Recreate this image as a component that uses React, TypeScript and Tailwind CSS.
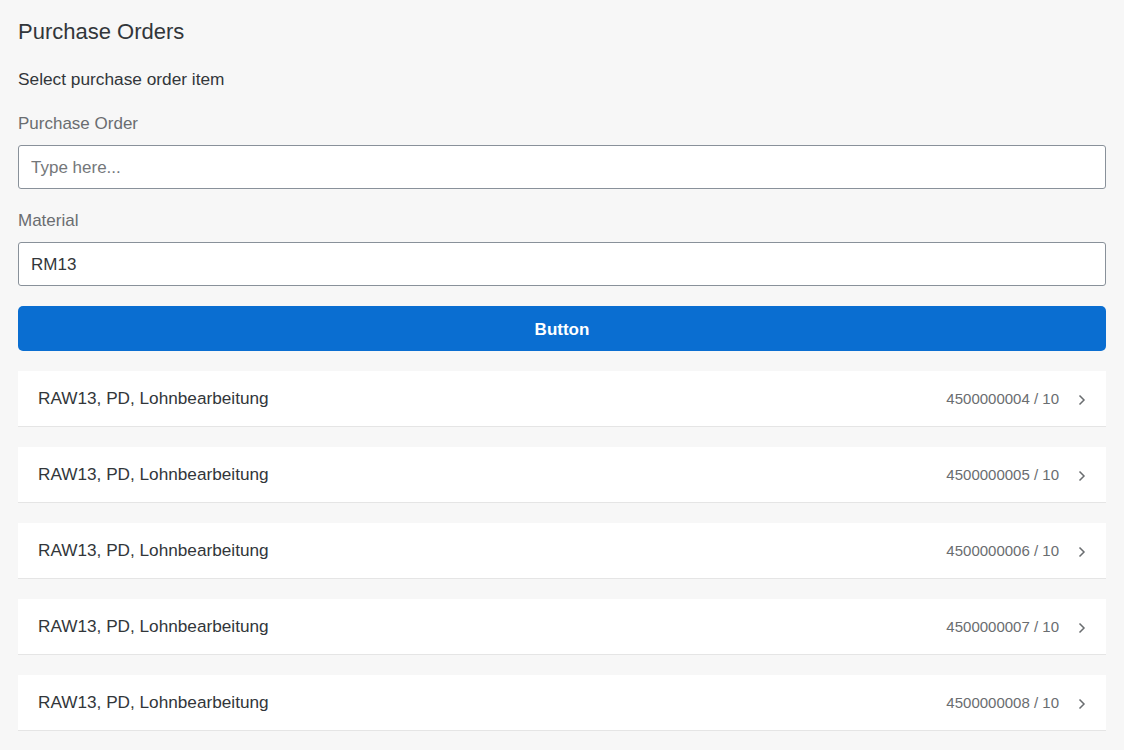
import { useState } from "react";

const items = [
  { id: "4500000004", pos: "10" },
  { id: "4500000005", pos: "10" },
  { id: "4500000006", pos: "10" },
  { id: "4500000007", pos: "10" },
  { id: "4500000008", pos: "10" },
];

export default function App() {
  const [po, setPo] = useState("");
  const [mat, setMat] = useState("RM13");

  return (
    <div className="min-h-[750px] bg-[#f7f7f7] px-[18px] pt-5 pb-5 text-[#32363a] font-['Liberation_Sans',Arial,sans-serif]">
      <h1 className="text-[22px] leading-6">Purchase Orders</h1>
      <p className="mt-[25px] text-[17.3px] leading-5">Select purchase order item</p>

      <Field label="Purchase Order" v={po} on={setPo} placeholder="Type here..." top="mt-[25px]" />
      <Field label="Material" v={mat} on={setMat} top="mt-[22px]" />

      <button className="mt-5 h-[45px] w-full rounded-[5px] bg-[#0a6ed1] pt-[3px] text-[17px] font-bold text-white">Button</button>

      <div className="mt-5 flex flex-col gap-5">
        {items.map((it) => (
          <div key={it.id} className="flex h-14 items-center border-b border-[#e5e5e5] bg-white px-5">
            <span className="flex-1 pt-px text-[17.2px]">RAW13, PD, Lohnbearbeitung</span>
            <span className="pt-px text-[15px] text-[#6a6d70]">{it.id} / {it.pos}</span>
            <svg width="8" height="12" viewBox="0 0 8 12" className="ml-[19px] mt-0.5 text-[#6a6d70]">
              <polyline points="1.5,1.5 6,6 1.5,10.5" fill="none" stroke="currentColor" strokeWidth="1.5" />
            </svg>
          </div>
        ))}
      </div>
    </div>
  );
}

function Field({ label, v, on, placeholder, top }: { label: string; v: string; on: (x: string) => void; placeholder?: string; top: string }) {
  return (
    <div className={top}>
      <label className="block text-[17px] leading-5 text-[#6a6d70]">{label}</label>
      <input
        value={v}
        placeholder={placeholder}
        onChange={(e) => on(e.target.value)}
        className="mt-[11px] h-11 w-full rounded-[3px] border border-[#89919a] bg-white px-3 pt-0.5 text-[17px] text-[#32363a] outline-none placeholder:text-[#74777a]"
      />
    </div>
  );
}
